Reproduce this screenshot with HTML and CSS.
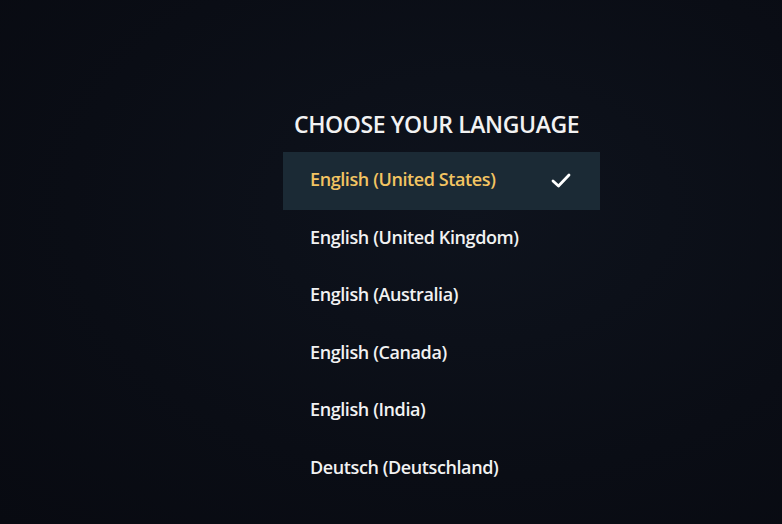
FILE: index.html
```html
<!DOCTYPE html>
<html lang="en">
<head>
    <meta charset="UTF-8">
    <meta name="viewport" content="width=device-width, initial-scale=1.0">
    <title>Choose your language</title>
    <link rel="stylesheet" href="styles.css">
</head>
<body>

    <div class="screen">
        <div class="panel">
            <div class="panel-title">CHOOSE YOUR LANGUAGE</div>
            <ul class="lang-list">
                <li class="lang selected">
                    <span>English (United States)</span>
                    <svg class="check" viewBox="0 0 20 15" width="20" height="15">
                        <path d="M2 8 L7.5 13 L18 2" fill="none" stroke="#fff" stroke-width="2.8" stroke-linecap="round" stroke-linejoin="round"/>
                    </svg>
                </li>
                <li class="lang"><span>English (United Kingdom)</span></li>
                <li class="lang"><span>English (Australia)</span></li>
                <li class="lang"><span>English (Canada)</span></li>
                <li class="lang"><span>English (India)</span></li>
                <li class="lang"><span>Deutsch (Deutschland)</span></li>
            </ul>
        </div>
    </div>

</body>
</html>
```

FILE: styles.css
```css
* { margin: 0; padding: 0; box-sizing: border-box; font-family: "Open Sans", sans-serif; }
body { background: #0a0d15; color: #f2f2f2; height: 524px; overflow: hidden; }
.screen {
    height: 524px; padding-top: 108px; padding-left: 283px;
    background: radial-gradient(ellipse at 60% 40%, #0e131d 0%, #0a0d15 60%, #080a11 100%);
}
.panel { width: 317px; }
.panel-title { font-size: 23px; font-weight: 600; padding-left: 11px; line-height: 32px; margin-bottom: 12px; letter-spacing: -0.4px; }
.lang-list { list-style: none; }
.lang {
    height: 57.5px; display: flex; align-items: center; justify-content: space-between;
    padding: 0 29px 3px 27px; font-size: 18px; font-weight: 600; letter-spacing: -0.4px;
}
.lang.selected { background: #1b2a35; color: #f3c462; }
.check { display: block; margin-top: 2px; }
```
